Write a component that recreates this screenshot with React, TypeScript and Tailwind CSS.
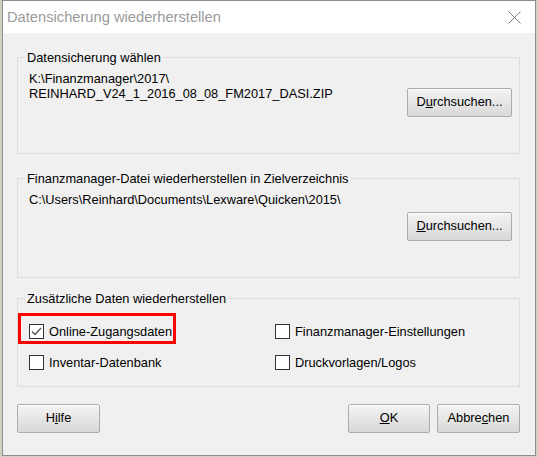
import type { ReactNode } from "react";

// Windows-style push button with an underlined access key
function Btn({ children, className = "" }: { children: ReactNode; className?: string }) {
  return (
    <button
      className={`h-[29px] border border-[#acacac] rounded-[2px] bg-linear-to-b from-[#f4f4f4] to-[#d8d8d8] text-[12.8px] text-black leading-none shadow-[inset_0_1px_0_#fdfdfd] ${className}`}
    >
      {children}
    </button>
  );
}

function Check({ checked = false, label }: { checked?: boolean; label: string }) {
  return (
    <span className="inline-flex items-center gap-[5px] h-[15px]">
      <span className="w-[15px] h-[15px] border border-[#333] bg-white flex items-center justify-center">
        {checked && (
          <svg width="11" height="9" viewBox="0 0 11 9">
            <path d="M1 4.5 L4 7.5 L10 1" fill="none" stroke="#555" strokeWidth="1.3" />
          </svg>
        )}
      </span>
      <span>{label}</span>
    </span>
  );
}

function Group({ title, className, children }: { title: string; className: string; children: ReactNode }) {
  return (
    <fieldset className={`border border-[#dcdcdc] pl-[11px] pr-[7px] ${className}`}>
      <legend className="-ml-[4px] px-[2px] leading-[15px]">{title}</legend>
      {children}
    </fieldset>
  );
}

export default function App() {
  return (
    <div className="w-[538px] h-[457px] overflow-hidden bg-[#d3d0c2] font-['Liberation_Sans',Arial,sans-serif] text-[12.8px] text-black">
      <div className="ml-[2px] w-[534px] h-[456px] border border-[#8e8e8e] bg-[#f0f0f0] flex flex-col">
        {/* title bar */}
        <div className="h-[32px] bg-white flex items-center justify-between pl-[4px] pr-[14px]">
          <span className="text-[14.7px] text-[#9a9a9a] leading-none">Datensicherung wiederherstellen</span>
          <svg width="13" height="13" viewBox="0 0 13 13">
            <path d="M0.5 0.5 L12.5 12.5 M12.5 0.5 L0.5 12.5" stroke="#7c7c7c" strokeWidth="1" />
          </svg>
        </div>

        <div className="flex flex-col pl-[14px] pr-[15px] pt-[17px]">
          <Group title="Datensicherung wählen" className="h-[104px]">
            <div className="flex justify-between mt-[6px]">
              <div className="leading-[15px]">
                <div>K:\Finanzmanager\2017\</div>
                <div>REINHARD_V24_1_2016_08_08_FM2017_DASI.ZIP</div>
              </div>
              <Btn className="w-[105px] mt-[17px]">
                D<u>u</u>rchsuchen...
              </Btn>
            </div>
          </Group>

          <Group title="Finanzmanager-Datei wiederherstellen in Zielverzeichnis" className="h-[107px] mt-[17px]">
            <div className="flex justify-between mt-[6px]">
              <div className="leading-[15px]">C:\Users\Reinhard\Documents\Lexware\Quicken\2015\</div>
              <Btn className="w-[105px] mt-[20px]">
                <u>D</u>urchsuchen...
              </Btn>
            </div>
          </Group>

          <Group title="Zusätzliche Daten wiederherstellen" className="h-[96px] mt-[13px]">
            <div className="grid grid-cols-[246px_1fr] gap-y-[16px] mt-[18px]">
              <span className="relative inline-flex w-fit">
                <Check checked label="Online-Zugangsdaten" />
                <span className="absolute -left-[11px] -top-[11px] -bottom-[5px] -right-[4px] border-[3px] border-[#ff0000]" />
              </span>
              <Check label="Finanzmanager-Einstellungen" />
              <Check label="Inventar-Datenbank" />
              <Check label="Druckvorlagen/Logos" />
            </div>
          </Group>

          <div className="flex mt-[17px]">
            <Btn className="w-[83px]">
              H<u>i</u>lfe
            </Btn>
            <Btn className="w-[82px] ml-auto">
              <u>O</u>K
            </Btn>
            <Btn className="w-[83px] ml-[7px]">
              Abbre<u>c</u>hen
            </Btn>
          </div>
        </div>
      </div>
    </div>
  );
}
